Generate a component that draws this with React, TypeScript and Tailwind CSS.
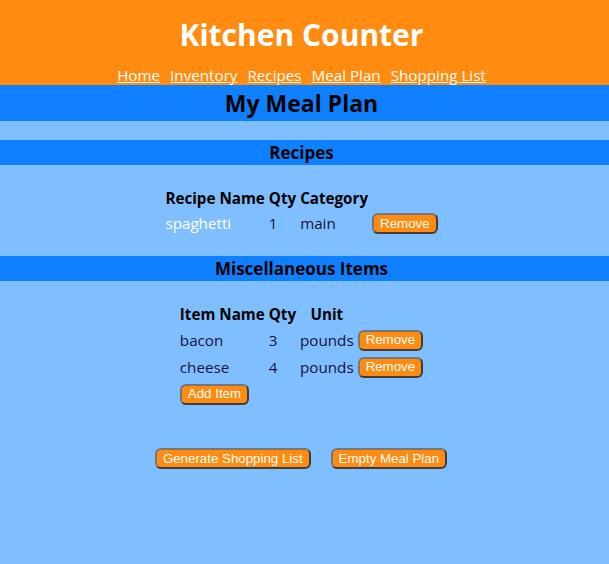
import React from "react";

type Recipe = { name: string; qty: number; category: string };
type Item = { name: string; qty: number; unit: string };

const recipes: Recipe[] = [{ name: "spaghetti", qty: 1, category: "main" }];
const items: Item[] = [
	{ name: "bacon", qty: 3, unit: "pounds" },
	{ name: "cheese", qty: 4, unit: "pounds" },
];

const font = { fontFamily: '"Open Sans", "Noto Sans", sans-serif' };

function OrangeButton({ children }: { children: React.ReactNode }) {
	return (
		<button className="h-[21px] px-[6px] bg-[#ff8c10] text-white text-[13.3px] leading-none border-2 border-[#3d3d3d] border-t-[#767676] border-l-[#767676] rounded-[6px] font-['Liberation_Sans',Arial,sans-serif]">
			{children}
		</button>
	);
}

function Band({ children, big }: { children: React.ReactNode; big?: boolean }) {
	return (
		<div
			className={
				big
					? "h-[36px] pr-[6px] bg-[#0f80ff] flex items-center justify-center text-[23px] font-bold text-black"
					: "h-[25px] pr-[6px] bg-[#0f80ff] flex items-center justify-center text-[17px] font-bold text-black"
			}
		>
			{children}
		</div>
	);
}

export default function App() {
	return (
		<div className="w-full min-h-[564px] bg-[#80bfff] text-[15.2px]" style={font}>
			<header className="h-[85px] pr-[6px] bg-[#ff8c10] flex flex-col items-center">
				<h1 className="mt-[15px] text-[30px] leading-[40px] font-bold text-white">Kitchen Counter</h1>
				<nav className="mt-[10px] flex gap-[10px] text-white text-[15.2px] leading-[20px]">
					<a className="underline">Home</a>
					<a className="underline">Inventory</a>
					<a className="underline">Recipes</a>
					<a className="underline">Meal Plan</a>
					<a className="underline">Shopping List</a>
				</nav>
			</header>

			<Band big>My Meal Plan</Band>
			<div className="h-[19px]" />
			<Band>Recipes</Band>

			<div className="flex justify-center pr-[6px] pt-[19px] pb-[19px]">
				<table className="border-separate border-spacing-[2px] text-[#1a1040] leading-[20px]">
					<thead>
						<tr className="h-[23px]">
							<th className="px-px font-bold text-black">Recipe Name</th>
							<th className="px-px font-bold text-black">Qty</th>
							<th className="px-px font-bold text-black">Category</th>
							<th />
						</tr>
					</thead>
					<tbody>
						{recipes.map((r, i) => (
							<tr key={i} className="h-[24px]">
								<td className="px-px text-white">{r.name}</td>
								<td className="px-px">{r.qty}</td>
								<td className="px-px">{r.category}</td>
								<td className="px-px">
									<OrangeButton>Remove</OrangeButton>
								</td>
							</tr>
						))}
					</tbody>
				</table>
			</div>

			<Band>Miscellaneous Items</Band>

			<div className="flex justify-center pr-[6px] pt-[19px]">
				<table className="border-separate border-spacing-[2px] text-[#1a1040] leading-[20px]">
					<thead>
						<tr className="h-[23px]">
							<th className="px-px font-bold text-black">Item Name</th>
							<th className="px-px font-bold text-black">Qty</th>
							<th className="px-px font-bold text-black">Unit</th>
							<th />
						</tr>
					</thead>
					<tbody>
						{items.map((it, i) => (
							<tr key={i} className="h-[25px]">
								<td className="px-px">{it.name}</td>
								<td className="px-px">{it.qty}</td>
								<td className="px-px">{it.unit}</td>
								<td className="px-px">
									<OrangeButton>Remove</OrangeButton>
								</td>
							</tr>
						))}
						<tr className="h-[25px]">
							<td className="px-px" colSpan={4}>
								<OrangeButton>Add Item</OrangeButton>
							</td>
						</tr>
					</tbody>
				</table>
			</div>

			<div className="flex justify-center gap-[20px] mt-[40px] pr-[7px]">
				<OrangeButton>Generate Shopping List</OrangeButton>
				<OrangeButton>Empty Meal Plan</OrangeButton>
			</div>
		</div>
	);
}
